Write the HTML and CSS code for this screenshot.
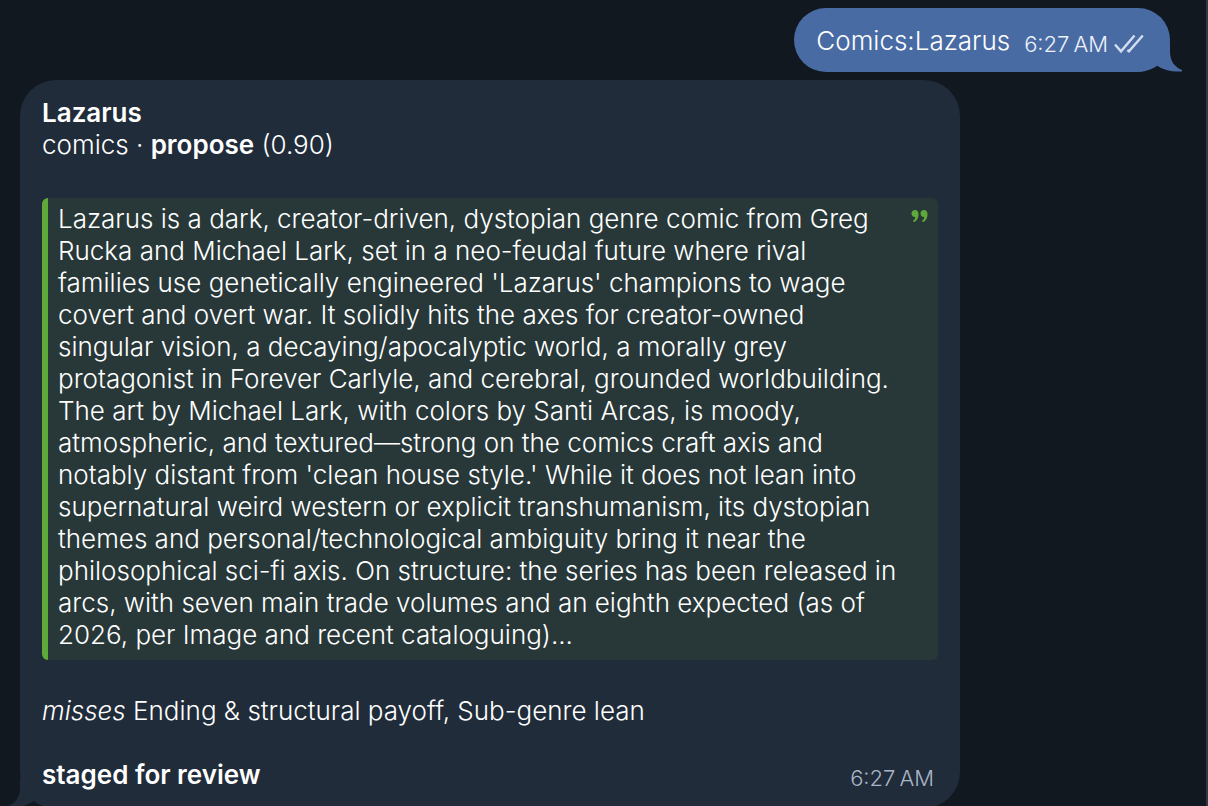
FILE: index.html
```html
<!DOCTYPE html>
<html lang="en">

<head>
	<title>Comics chat</title>
	<meta charset="utf-8"/>
	<meta name="viewport" content="width=device-width, initial-scale=1"/>

	<link rel="stylesheet" href="styles.css">
</head>

<body>
	<main class="chat">
		<article class="message outgoing">
			<p class="text">Comics:Lazarus</p>
			<div class="meta">
				<time>6:27&#8239;AM</time>
				<svg class="checks" width="30" height="20" viewBox="0 0 30 20" aria-hidden="true">
					<path d="M1 10.500 L7 17.400 L20.500 1.500 M13.400 16 L15 17.400 L28.800 1.500"/>
				</svg>
			</div>
			<svg class="tail" width="48" height="30" viewBox="0 0 48 30" aria-hidden="true">
				<path d="M0 0 H36 V10 C36 18 40 25 48 28 V29.500 C38 30 29 28 22 23 C17 27 10 30 2 30 H0 Z"/>
			</svg>
		</article>

		<article class="message incoming">
			<p class="text"><b>Lazarus</b><br>comics · <b>propose</b> (0.90)</p>

			<blockquote class="quote">
				Lazarus is a dark, creator-driven, dystopian genre comic from Greg<br>
				Rucka and Michael Lark, set in a neo-feudal future where rival<br>
				families use genetically engineered 'Lazarus' champions to wage<br>
				covert and overt war. It solidly hits the axes for creator-owned<br>
				singular vision, a decaying/apocalyptic world, a morally grey<br>
				protagonist in Forever Carlyle, and cerebral, grounded worldbuilding.<br>
				The art by Michael Lark, with colors by Santi Arcas, is moody,<br>
				atmospheric, and textured—strong on the comics craft axis and<br>
				notably distant from 'clean house style.' While it does not lean into<br>
				supernatural weird western or explicit transhumanism, its dystopian<br>
				themes and personal/technological ambiguity bring it near the<br>
				philosophical sci-fi axis. On structure: the series has been released in<br>
				arcs, with seven main trade volumes and an eighth expected (as of<br>
				2026, per Image and recent cataloguing)...
				<svg class="quote-mark" width="18" height="14" viewBox="0 0 18 14" aria-hidden="true">
					<path d="M4 1 C6.400 1 7.500 2.900 7.500 5.200 C7.500 9 5.600 12.300 3.200 12.900 C2 13 1.700 12 2.600 11.300 C3.700 10.400 4.200 9.400 4.300 7.900 C2 8.100 .5 6.600 .5 4.500 C.5 2.500 2 1 4 1 Z"/>
					<path transform="translate(9)" d="M4 1 C6.400 1 7.500 2.900 7.500 5.200 C7.500 9 5.600 12.300 3.200 12.900 C2 13 1.700 12 2.600 11.300 C3.700 10.400 4.200 9.400 4.300 7.900 C2 8.100 .5 6.600 .5 4.500 C.5 2.500 2 1 4 1 Z"/>
				</svg>
			</blockquote>

			<p class="text"><i>misses</i> Ending &amp; structural payoff, Sub-genre lean</p>

			<footer class="last-line">
				<b>staged for review</b>
				<time>6:27&#8239;AM</time>
			</footer>
			<svg class="tail" width="48" height="30" viewBox="0 0 48 30" aria-hidden="true">
				<path d="M48 0 H12 V10 C12 18 8 25 0 28 V29.500 C10 30 19 28 26 23 C31 27 38 30 46 30 H48 Z"/>
			</svg>
		</article>
	</main>
</body>
</html>
```
FILE: styles.css
```css
* {
	box-sizing: border-box;
}

body {
	margin: 0;
	min-height: 100vh;
	background-color: #11181f;
	border-right: 2px solid #33393f;
	color: white;
	font-family: Inter, "Liberation Sans", sans-serif;
	font-size: 26px;
	font-weight: 350;
	line-height: 32px;
}

p, blockquote {
	margin: 0;
}

b {
	font-weight: 600;
}

time {
	font-size: 22px;
	white-space: nowrap;
}

.chat {
	display: flex;
	flex-direction: column;
	gap: 8px;
	padding: 8px 36px 0 20px;
}

.message {
	position: relative;
	isolation: isolate;
	max-width: 940px;
	border-radius: 36px;
}

.outgoing {
	display: flex;
	align-items: center;
	align-self: flex-end;
	gap: 14px;
	padding: 17px 26px 15px 22px;
	background-color: #496ba4;
}

.outgoing .meta {
	display: flex;
	align-items: center;
	gap: 6px;
	padding-top: 6px;
	height: 32px;
	color: #edf2fa;
}

.checks path {
	fill: none;
	stroke: #d3def0;
	stroke-width: 2.4;
}

/* sits behind the text, over the bubble background */
.tail {
	position: absolute;
	bottom: 0;
	z-index: -1;
}

.outgoing .tail {
	right: -12px;
	fill: #496ba4;
}

.incoming {
	width: 100%;
	padding: 17px 22px 14px;
	background-color: #212c3a;
}

.incoming .tail {
	left: -12px;
	fill: #212c3a;
}

.quote {
	position: relative;
	margin: 37px 0 35px;
	padding: 5px 8px 9px 10px;
	border-left: 6px solid #5fa83a;
	border-radius: 6px;
	background-color: #283839;
}

.quote-mark {
	position: absolute;
	top: 11px;
	right: 9px;
	fill: #5fa83a;
}

.last-line {
	display: flex;
	justify-content: space-between;
	margin-top: 32px;
	padding-right: 4px;
}

.last-line time {
	padding-top: 3px;
	color: #a9b6c8;
}
```
